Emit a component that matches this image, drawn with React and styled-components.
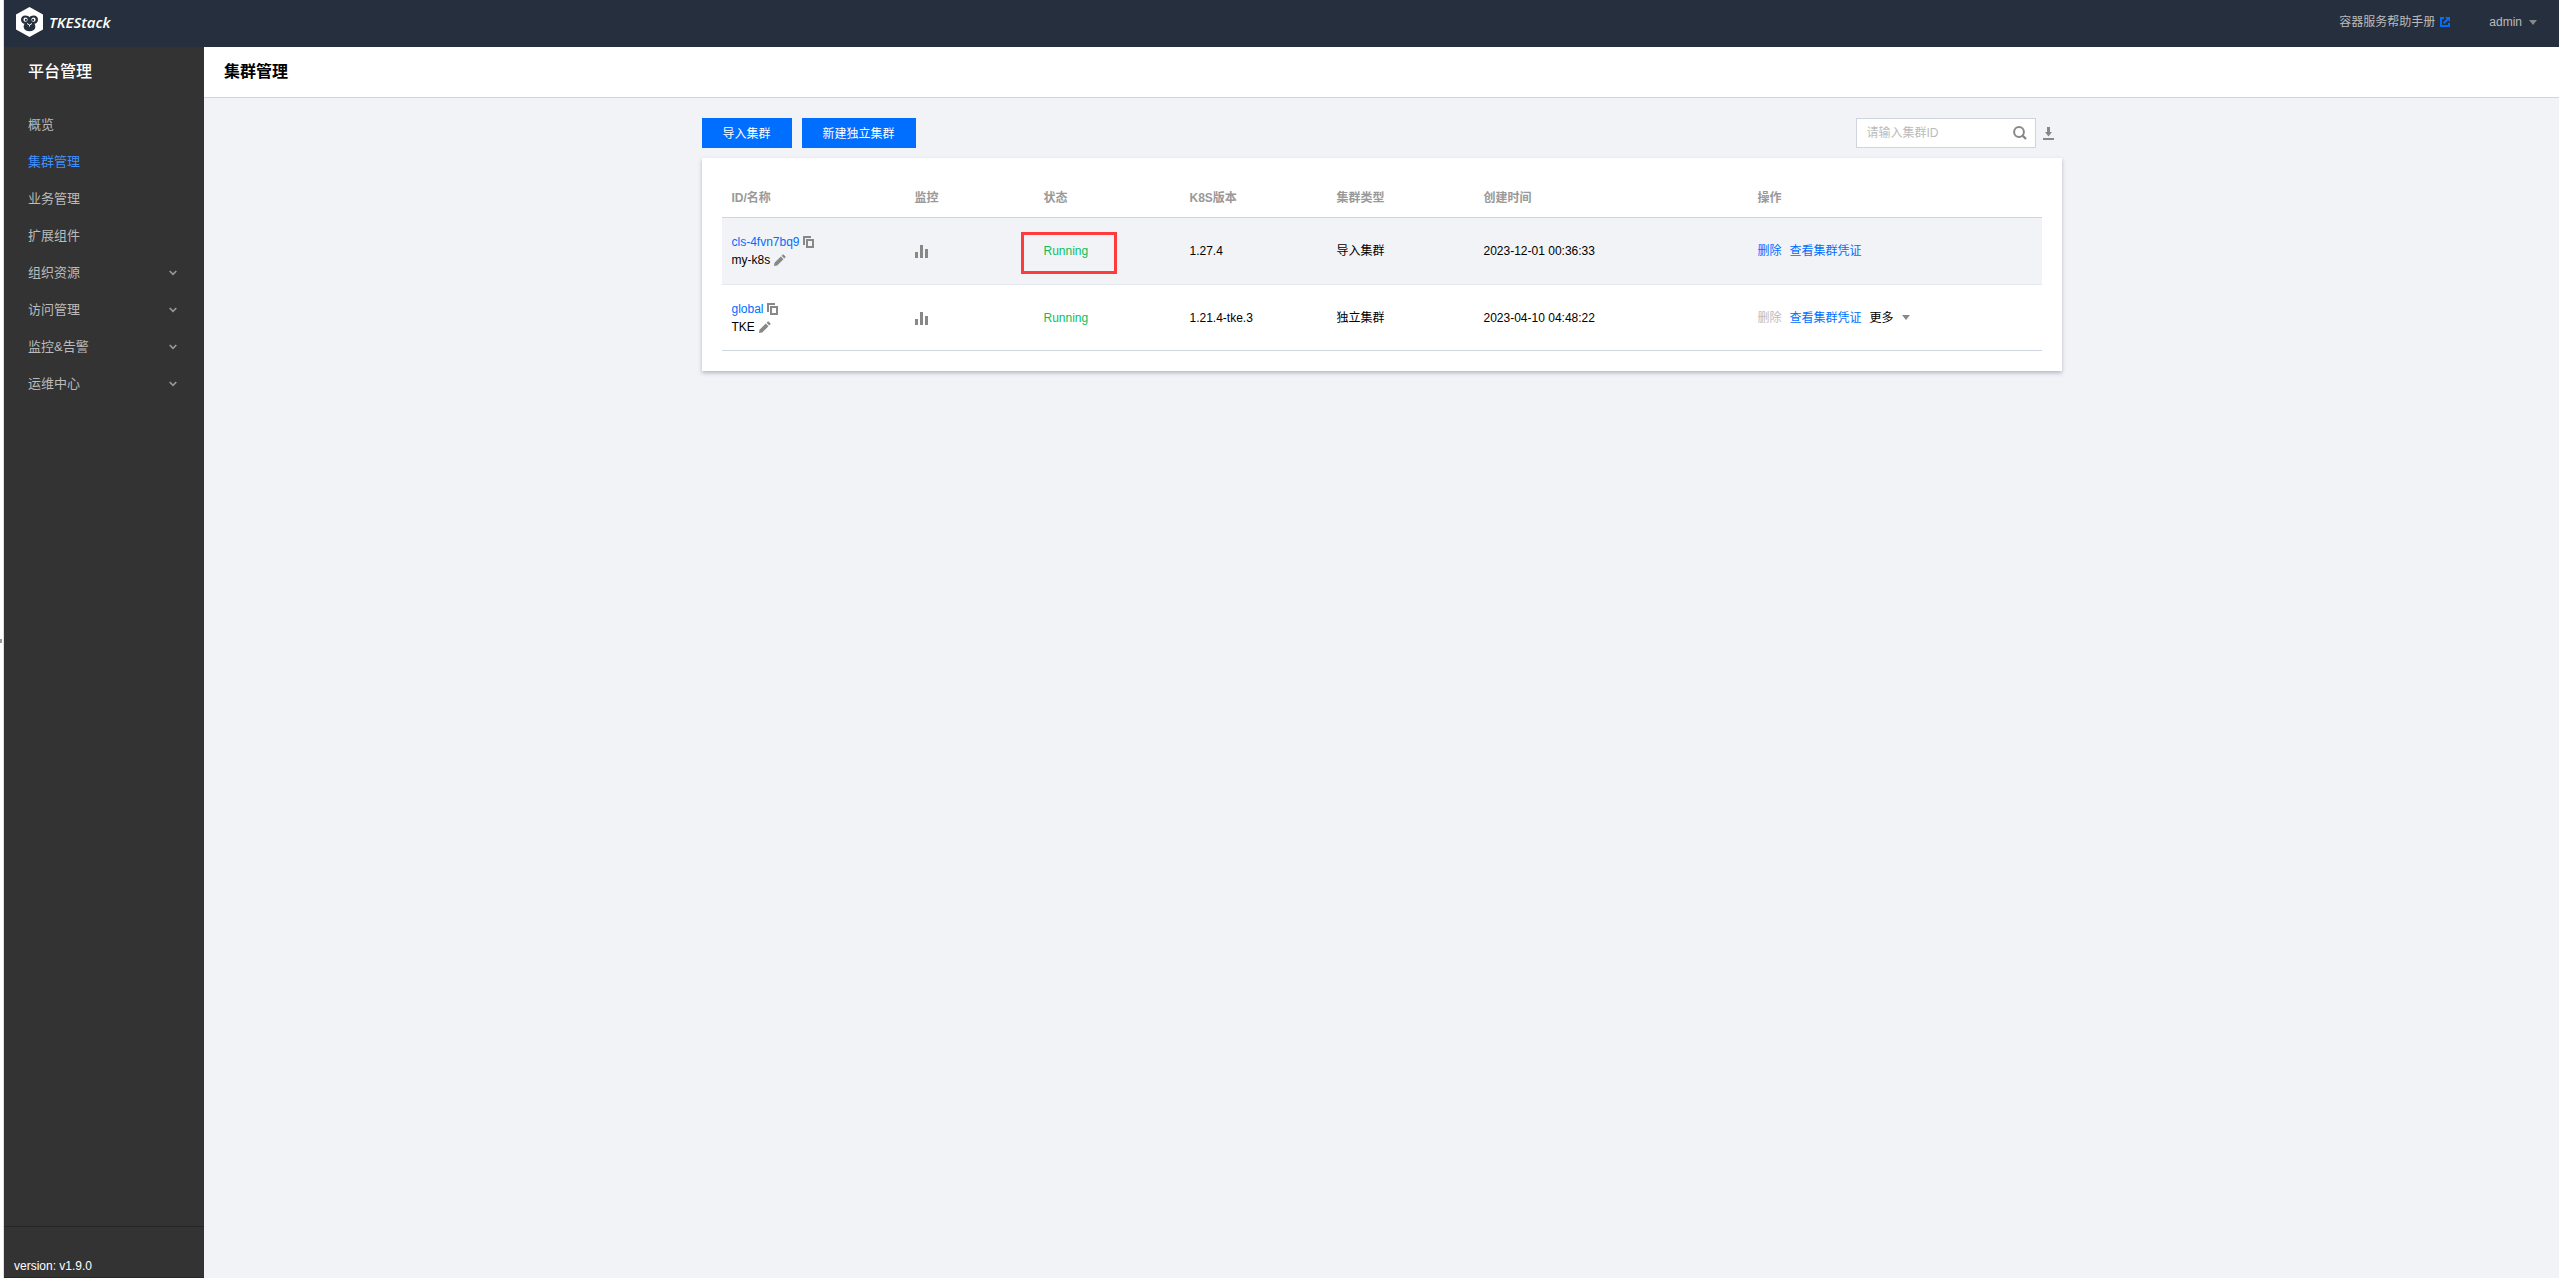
import React from 'react';
import styled, { createGlobalStyle } from 'styled-components';

const menus = [
  { name: '概览' },
  { name: '集群管理', active: true },
  { name: '业务管理' },
  { name: '扩展组件' },
  { name: '组织资源', sub: true },
  { name: '访问管理', sub: true },
  { name: '监控&告警', sub: true },
  { name: '运维中心', sub: true },
];

const columns = [
  { title: 'ID/名称', width: 183 },
  { title: '监控', width: 129 },
  { title: '状态', width: 146 },
  { title: 'K8S版本', width: 147 },
  { title: '集群类型', width: 147 },
  { title: '创建时间', width: 274 },
  { title: '操作', width: 294 },
];

const clusters = [
  {
    id: 'cls-4fvn7bq9',
    name: 'my-k8s',
    status: 'Running',
    version: '1.27.4',
    type: '导入集群',
    created: '2023-12-01 00:36:33',
    marked: true,
  },
  {
    id: 'global',
    name: 'TKE',
    status: 'Running',
    version: '1.21.4-tke.3',
    type: '独立集群',
    created: '2023-04-10 04:48:22',
    locked: true,
  },
];

//Icons
const LogoIcon = () => (
  <svg width="27" height="30" viewBox="0 0 27 30" aria-hidden="true">
    <path fill="#fff" d="M13.500 0L27 7.500V22.500L13.500 30L0 22.500V7.500Z" />
    <path
      fill="#262f3e"
      d="M9.500 8.500C6.500 8.500 5 10.500 5 12.700C5 15 6.600 16.600 8.600 16.800C7.800 18 7.600 19 7.700 20.200C8 22.800 10.500 24.200 13.500 24.200C16.500 24.200 19 22.800 19.300 20.200C19.400 19 19.200 18 18.400 16.800C20.400 16.600 22 15 22 12.700C22 10.500 20.500 8.500 17.500 8.500C15.500 8.500 14.200 9.300 13.500 10.300C12.800 9.300 11.500 8.500 9.500 8.500Z"
    />
    <circle cx="9.500" cy="12.700" r="2.100" fill="#fff" />
    <circle cx="17.500" cy="12.700" r="2.100" fill="#fff" />
    <circle cx="9.900" cy="12.900" r="1.100" fill="#262f3e" />
    <circle cx="17.100" cy="12.900" r="1.100" fill="#262f3e" />
    <path d="M11 16.500L13.500 18L16 16.500M13.500 18V19.500" stroke="#fff" fill="none" />
  </svg>
);

const LinkIcon = () => (
  <svg width="10" height="10" viewBox="0 0 10 10" aria-hidden="true">
    <path fill="#006eff" d="M0 0H4V2H2V8H8V6H10V10H0ZM5 0H10V5L8.300 3.300L4.500 7.100L2.900 5.500L6.700 1.700Z" />
  </svg>
);

const ArrowIcon = () => (
  <svg width="8" height="5" viewBox="0 0 8 5" aria-hidden="true">
    <path fill="#888" d="M0 0H8L4 5Z" />
  </svg>
);

const ChevronIcon = () => (
  <svg width="8" height="6" viewBox="0 0 8 6" aria-hidden="true">
    <path d="M0.700 1L4 4.300L7.300 1" fill="none" stroke="#999" strokeWidth="1.700" />
  </svg>
);

const CopyIcon = () => (
  <svg width="11" height="12" viewBox="0 0 11 12" aria-hidden="true">
    <path fill="#888" d="M0 0H8V2H2V9H0ZM3 3H11V12H3ZM5 5V10H9V5Z" fillRule="evenodd" />
  </svg>
);

const PencilIcon = () => (
  <svg width="12" height="12" viewBox="0 0 12 12" aria-hidden="true">
    <path fill="#888" d="M0 12L0.500 8.800L6.800 2.500L9.500 5.200L3.200 11.500ZM7.600 1.700L9.200 0.200L11.800 2.800L10.300 4.400Z" />
  </svg>
);

const ChartIcon = () => (
  <svg width="13" height="13" viewBox="0 0 13 13" aria-hidden="true">
    <path fill="#888" d="M0 7H3V13H0ZM5 0H8V13H5ZM10 4H13V13H10Z" />
  </svg>
);

const SearchIcon = () => (
  <svg width="14" height="14" viewBox="0 0 14 14" aria-hidden="true">
    <circle cx="6" cy="6" r="4.900" fill="none" stroke="#888" strokeWidth="2" />
    <path d="M9 9L13 13" stroke="#888" strokeWidth="2.400" />
  </svg>
);

const DownloadIcon = () => (
  <svg width="11" height="13" viewBox="0 0 11 13" aria-hidden="true">
    <path fill="#888" d="M4 0H7V5H9L5.500 9.500L2 5H4ZM0 11H11V13H0Z" />
  </svg>
);

const App = () => (
  <Page>
    <GlobalStyle />
    <Edge>
      <EdgeHandle />
    </Edge>
    <Layout>
      <Header>
        <Brand href="#">
          <LogoIcon />
          <BrandName>TKEStack</BrandName>
        </Brand>
        <HeaderNav>
          <HeaderLink href="#">
            容器服务帮助手册
            <LinkIcon />
          </HeaderLink>
          <UserButton>
            admin
            <ArrowIcon />
          </UserButton>
        </HeaderNav>
      </Header>
      <Body>
        <Sidebar>
          <SidebarTitle>平台管理</SidebarTitle>
          <Menu>
            {menus.map((menu) => (
              <li key={menu.name}>
                <MenuLink href="#" $active={menu.active}>
                  {menu.name}
                  {menu.sub && <ChevronIcon />}
                </MenuLink>
              </li>
            ))}
          </Menu>
          <Version>version: v1.9.0</Version>
        </Sidebar>
        <Main>
          <PageHeader>
            <PageTitle>集群管理</PageTitle>
          </PageHeader>
          <Content>
            <Toolbar>
              <Button>导入集群</Button>
              <Button>新建独立集群</Button>
              <SearchBox>
                <SearchInput aria-label="集群ID" placeholder="请输入集群ID" />
                <IconButton aria-label="搜索">
                  <SearchIcon />
                </IconButton>
              </SearchBox>
              <IconButton aria-label="下载">
                <DownloadIcon />
              </IconButton>
            </Toolbar>
            <Card>
              <Table>
                <colgroup>
                  {columns.map((col) => (
                    <Col key={col.title} $width={col.width} />
                  ))}
                </colgroup>
                <thead>
                  <tr>
                    {columns.map((col) => (
                      <Th key={col.title}>{col.title}</Th>
                    ))}
                  </tr>
                </thead>
                <tbody>
                  {clusters.map((item) => (
                    <Row key={item.id} $shaded={item.marked}>
                      <Td>
                        <Line>
                          <TextLink href="#">{item.id}</TextLink>
                          <IconButton aria-label="复制">
                            <CopyIcon />
                          </IconButton>
                        </Line>
                        <Line $gap={4}>
                          {item.name}
                          <IconButton aria-label="编辑">
                            <PencilIcon />
                          </IconButton>
                        </Line>
                      </Td>
                      <Td>
                        <IconButton aria-label="监控">
                          <ChartIcon />
                        </IconButton>
                      </Td>
                      <Td>
                        <Status>
                          {item.status}
                          {item.marked && <Mark />}
                        </Status>
                      </Td>
                      <Td>{item.version}</Td>
                      <Td>{item.type}</Td>
                      <Td>{item.created}</Td>
                      <Td>
                        <Line $gap={8}>
                          <ActionButton disabled={item.locked}>删除</ActionButton>
                          <ActionButton>查看集群凭证</ActionButton>
                          {item.locked && (
                            <MoreButton>
                              更多
                              <ArrowIcon />
                            </MoreButton>
                          )}
                        </Line>
                      </Td>
                    </Row>
                  ))}
                </tbody>
              </Table>
            </Card>
          </Content>
        </Main>
      </Body>
    </Layout>
  </Page>
);

export default App;

const GlobalStyle = createGlobalStyle`
  * {
      box-sizing: border-box;
  }

  body {
      margin: 0;
      font-family: "Liberation Sans", "Noto Sans CJK SC", sans-serif;
      font-size: 12px;
      line-height: 18px;
      color: #000;
      background: #f2f3f7;
  }

  button, input {
      font: inherit;
      border: none;
      padding: 0;
      margin: 0;
      background: none;
  }

  button {
      cursor: pointer;
  }

  a {
      text-decoration: none;
  }

  svg {
      display: block;
      flex: none;
  }
`;

const Page = styled.div`
  display: flex;
  min-height: 100vh;
`;

//Left edge
const Edge = styled.div`
  flex: none;
  display: flex;
  align-items: center;
  width: 4px;
  padding-top: 4px;
  background: #fff;
  border-right: 1px solid #dcdfe6;
`;

const EdgeHandle = styled.span`
  width: 2px;
  height: 4px;
  background: #999;
`;

const Layout = styled.div`
  flex: 1;
  min-width: 0;
  display: flex;
  flex-direction: column;
`;

//Header
const Header = styled.header`
  display: flex;
  align-items: center;
  justify-content: space-between;
  height: 47px;
  padding: 0 22px 3px 12px;
  background: #262f3e;
`;

const Brand = styled.a`
  display: flex;
  align-items: center;
  gap: 6px;
  color: #fff;
`;

const BrandName = styled.span`
  font-family: "Open Sans", sans-serif;
  font-size: 15px;
  font-style: italic;
  font-weight: 600;
`;

const HeaderNav = styled.nav`
  display: flex;
  align-items: center;
  gap: 39px;
`;

const HeaderLink = styled.a`
  display: flex;
  align-items: center;
  gap: 5px;
  color: #bbb;
`;

const UserButton = styled.button`
  display: flex;
  align-items: center;
  gap: 7px;
  color: #bbb;
`;

const Body = styled.div`
  flex: 1;
  display: flex;
`;

//Sidebar
const Sidebar = styled.aside`
  flex: none;
  display: flex;
  flex-direction: column;
  width: 200px;
  background: #333;
`;

const SidebarTitle = styled.h2`
  margin: 0;
  padding: 13px 24px 12px;
  font-size: 16px;
  line-height: 24px;
  font-weight: 500;
  color: #fff;
`;

const Menu = styled.ul`
  flex: 1;
  margin: 0;
  padding: 10px 0 0;
  list-style: none;
`;

const MenuLink = styled.a`
  display: flex;
  align-items: center;
  justify-content: space-between;
  height: 37px;
  padding: 0 27px 0 24px;
  font-size: 13px;
  color: ${(props) => (props.$active ? '#4091ff' : '#bbb')};
`;

const Version = styled.div`
  padding: 30px 10px 2px;
  border-top: 1px solid #262626;
  border-bottom: 1px solid #262626;
  color: #fff;
`;

//Main
const Main = styled.main`
  flex: 1;
  min-width: 0;
`;

const PageHeader = styled.div`
  height: 51px;
  padding: 13px 20px;
  background: #fff;
  border-bottom: 1px solid #cfd5de;
`;

const PageTitle = styled.h1`
  margin: 0;
  font-size: 16px;
  line-height: 24px;
  font-weight: 700;
`;

const Content = styled.div`
  max-width: 1400px;
  margin: 0 auto;
  padding: 20px;
`;

const Toolbar = styled.div`
  display: flex;
  align-items: center;
  gap: 10px;
  padding-right: 8px;
  margin-bottom: 10px;
`;

const Button = styled.button`
  height: 30px;
  padding: 2px 21px 0;
  color: #fff;
  background: #006eff;
`;

const SearchBox = styled.div`
  display: flex;
  align-items: center;
  width: 180px;
  height: 30px;
  margin-left: auto;
  margin-right: -3px;
  padding: 0 8px 0 10px;
  background: #fff;
  border: 1px solid #cfd5de;
`;

const SearchInput = styled.input`
  flex: 1;
  min-width: 0;
  outline: none;
  &::placeholder {
      color: #bbb;
  }
`;

const IconButton = styled.button`
  flex: none;
  vertical-align: middle;
`;

//Cluster table
const Card = styled.section`
  padding: 20px;
  background: #fff;
  box-shadow: 0 2px 4px rgba(54, 58, 80, 0.32);
`;

const Table = styled.table`
  width: 100%;
  table-layout: fixed;
  border-collapse: separate;
  border-spacing: 0;
`;

const Col = styled.col`
  width: ${(props) => props.$width / 13.2}%;
`;

const Th = styled.th`
  height: 40px;
  padding: 0 10px;
  text-align: left;
  font-weight: 700;
  color: #999;
  border-bottom: 1px solid #cfd5de;
`;

const Td = styled.td`
  height: 67px;
  padding: 0 10px;
  border-bottom: 1px solid #e5e8ed;
`;

const Row = styled.tr`
  background: ${(props) => (props.$shaded ? '#f2f3f7' : '#fff')};
  &:last-child td {
      height: 66px;
      border-bottom-color: #cfd5de;
  }
`;

const Line = styled.div`
  display: flex;
  align-items: center;
  gap: ${(props) => props.$gap || 3}px;
`;

const TextLink = styled.a`
  color: #006eff;
`;

const Status = styled.span`
  position: relative;
  color: #0abf5b;
`;

//Red frame round the status
const Mark = styled.span`
  position: absolute;
  top: -12px;
  left: -23px;
  width: 96px;
  height: 42px;
  border: 3px solid #ff3b3b;
`;

const ActionButton = styled.button`
  color: #006eff;
  &:disabled {
      color: #bbb;
      cursor: default;
  }
`;

const MoreButton = styled.button`
  display: flex;
  align-items: center;
  gap: 8px;
`;
